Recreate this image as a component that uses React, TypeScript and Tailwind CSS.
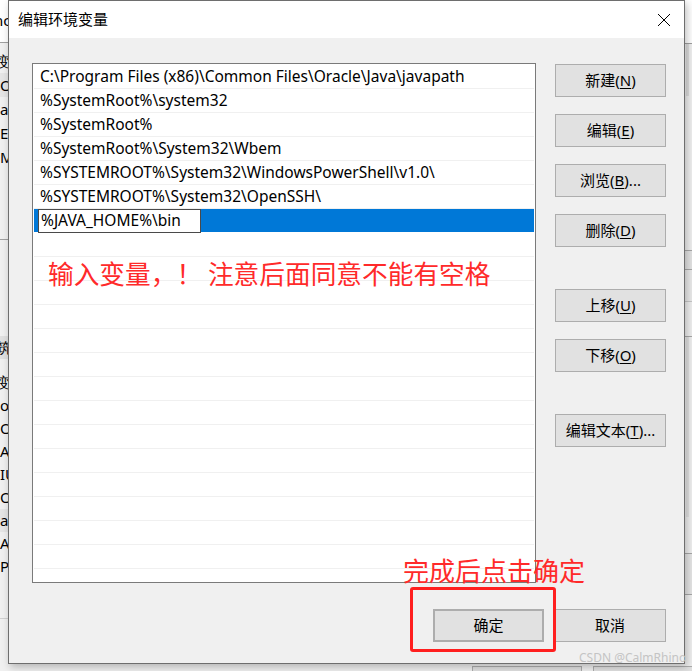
import type { ReactNode } from 'react'

const paths = [
  'C:\\Program Files (x86)\\Common Files\\Oracle\\Java\\javapath',
  '%SystemRoot%\\system32',
  '%SystemRoot%',
  '%SystemRoot%\\System32\\Wbem',
  '%SYSTEMROOT%\\System32\\WindowsPowerShell\\v1.0\\',
  '%SYSTEMROOT%\\System32\\OpenSSH\\',
]

const emptyRows = Array.from({ length: 14 })

const uiFont = "font-['Noto_Sans','Noto_Sans_CJK_SC',sans-serif]"

type BtnProps = {
  children: ReactNode
  className?: string
}

const Btn = ({ children, className = '' }: BtnProps) => (
  <div
    className={`flex h-[33px] w-[111px] items-center justify-center border border-[#adadad] bg-[#e1e1e1] text-[15px] text-black ${className}`}
  >
    {children}
  </div>
)

const Key = ({ children }: { children: ReactNode }) => (
  <span className="underline underline-offset-2">{children}</span>
)

const LeftBackdrop = () => (
  <div className="absolute left-0 top-0 flex h-full w-[40px] flex-col bg-[#f0f0f0] text-[15px] leading-[24px] text-black">
    <div className="h-[43px] border-b border-[#a0a0a0] bg-white pt-[8px] -indent-[6px]">nc</div>
    <div className="mt-[6px] flex flex-col">
      <div className="-indent-[4px]">变</div>
      <div className="bg-[#e5e5e5]">Or</div>
      <div>a</div>
      <div>E</div>
      <div>M</div>
    </div>
    <div className="mt-[70px] border-t border-[#a0a0a0]" />
    <div className="mt-[96px] flex flex-col leading-[23px]">
      <div className="bg-[#e0e0e0] -indent-[4px]">筑</div>
      <div className="mt-[12px] -indent-[4px]">变</div>
      <div>o</div>
      <div>Or</div>
      <div>A</div>
      <div>IU</div>
      <div>OS</div>
      <div className="bg-[#e5e5e5]">a</div>
      <div>A</div>
      <div>P</div>
    </div>
    <div className="mt-[40px] border-t border-[#d0d0d0]" />
  </div>
)

const RightBackdrop = () => (
  <div className="absolute right-0 top-0 flex h-full w-[10px] flex-col bg-[#f0f0f0]">
    <div className="h-[44px] border-b border-[#a0a0a0] bg-white" />
    <div className="ml-[4px] h-[52px] w-[3px] bg-[#dcdcdc]" />
    <div className="mt-[154px] h-[20px] border-y border-[#a8a8a8] bg-[#e4e4e4]" />
    <div className="h-[32px] border-b border-[#c8c8c8] bg-[#ebebeb]" />
    <div className="h-[35px] border-b border-[#a8a8a8] bg-[#f0f0f0]" />
    <div className="ml-[4px] h-[180px] w-[3px] bg-[#e2e2e2]" />
    <div className="mt-[36px] h-[42px] border-y border-[#a8a8a8] bg-[#e6e6e6]" />
  </div>
)

const Dialog = () => (
  <div
    className={`absolute left-[8px] top-0 flex h-[664px] w-[677px] flex-col border border-[#6e6e6e] bg-[#f0f0f0] shadow-[2px_3px_8px_rgba(0,0,0,0.25)] ${uiFont}`}
  >
    <div className="flex h-[37px] shrink-0 items-center justify-between bg-white pl-[9px] pr-[12px]">
      <span className="text-[15px] text-black">编辑环境变量</span>
      <svg width="14" height="14" viewBox="0 0 14 14" className="mr-[1px]">
        <path d="M1 1L13 13M13 1L1 13" stroke="#000" strokeWidth="1" />
      </svg>
    </div>

    <div className="flex gap-[19px] pl-[23px] pr-[18px] pt-[25px]">
      <div className="h-[520px] w-[504px] overflow-hidden border border-[#7a7a7a] bg-white px-[1px] pt-[1px] text-[15.5px] text-black">
        {paths.map((p) => (
          <div
            key={p}
            className="flex h-[24px] items-center border-b border-[#f0f0f0] pl-[6px] pt-[1px] whitespace-nowrap"
          >
            {p}
          </div>
        ))}
        <div className="flex h-[24px] items-center border-b border-white bg-[#0078d7] pl-[4px]">
          <div className="flex h-[24px] w-[163px] items-center border border-[#4a4a4a] bg-white pl-[2px] whitespace-nowrap">
            %JAVA_HOME%\bin
          </div>
        </div>
        {emptyRows.map((_, i) => (
          <div key={i} className="h-[24px] border-b border-[#f0f0f0]" />
        ))}
      </div>

      <div className="flex flex-col pt-[1px]">
        <Btn>
          新建(<Key>N</Key>)
        </Btn>
        <Btn className="mt-[17px]">
          编辑(<Key>E</Key>)
        </Btn>
        <Btn className="mt-[17px]">
          浏览(<Key>B</Key>)...
        </Btn>
        <Btn className="mt-[17px]">
          删除(<Key>D</Key>)
        </Btn>
        <Btn className="mt-[42px]">
          上移(<Key>U</Key>)
        </Btn>
        <Btn className="mt-[17px]">
          下移(<Key>O</Key>)
        </Btn>
        <Btn className="mt-[42px]">
          编辑文本(<Key>T</Key>)...
        </Btn>
      </div>
    </div>

    <div className="mt-[26px] flex justify-end gap-[10px] pr-[18px]">
      <Btn className="border-2 border-[#0078d7]">确定</Btn>
      <Btn className="w-[112px]">取消</Btn>
    </div>
  </div>
)

const App = () => (
  <div className="relative h-[671px] w-[692px] overflow-hidden bg-[#f0f0f0]">
    <LeftBackdrop />
    <RightBackdrop />
    <div className="absolute bottom-0 left-[472px] h-[5px] w-[110px] border border-b-0 border-[#adadad] bg-[#e1e1e1]" />
    <div className="absolute bottom-0 left-[593px] h-[5px] w-[110px] border border-b-0 border-[#adadad] bg-[#e1e1e1]" />
    <Dialog />

    <div className="absolute left-[48px] top-[259px] whitespace-nowrap font-['Noto_Sans_CJK_SC',sans-serif] text-[25.7px] leading-[28px] text-[#ff2a2a]">
      输入变量，！ 注意后面同意不能有空格
    </div>
    <div className="absolute left-[403px] top-[556px] whitespace-nowrap font-['Noto_Sans_CJK_SC',sans-serif] text-[26px] leading-[28px] text-[#ff2a2a]">
      完成后点击确定
    </div>
    <div className="absolute left-[410px] top-[587px] h-[65px] w-[146px] rounded-[3px] border-[3px] border-[#ff1f1f]" />
    <div className="absolute left-[579px] top-[649px] whitespace-nowrap font-['Noto_Sans',sans-serif] text-[12px] text-[#c4c4c4]">
      CSDN @CalmRhino
    </div>
  </div>
)

export default App
